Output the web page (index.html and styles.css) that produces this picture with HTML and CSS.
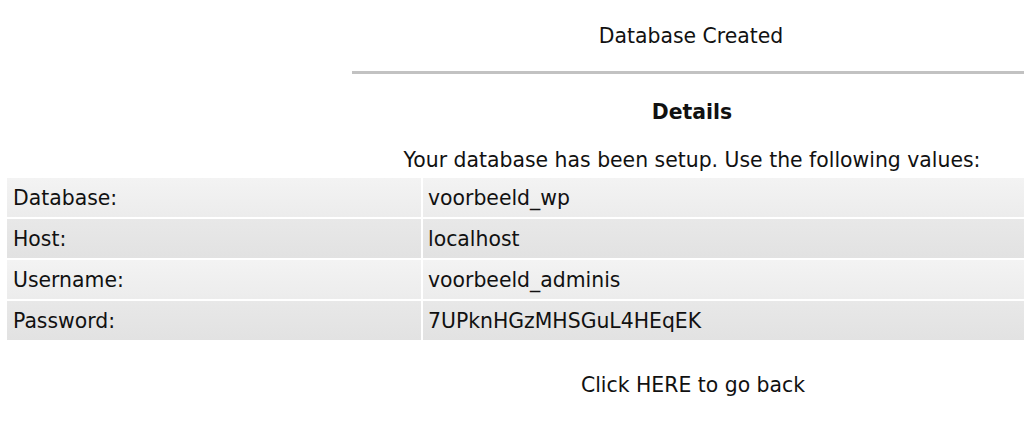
FILE: index.html
```html
<!DOCTYPE html>
<html lang="nl">
<head>
<meta charset="utf-8">
<title>Database Created</title>
<link rel="stylesheet" href="styles.css">
</head>
<body>
<div class="head">
  <div class="title">Database Created</div>
  <hr class="rule">
  <div class="subtitle">Details</div>
  <div class="intro">Your database has been setup. Use the following values:</div>
</div>
<div class="values">
  <div class="cell label odd">Database:</div><div class="cell value odd">voorbeeld_wp</div>
  <div class="cell label even">Host:</div><div class="cell value even">localhost</div>
  <div class="cell label odd">Username:</div><div class="cell value odd">voorbeeld_adminis</div>
  <div class="cell label even">Password:</div><div class="cell value even">7UPknHGzMHSGuL4HEqEK</div>
</div>
<div class="back">Click <a href="#">HERE</a> to go back</div>
</body>
</html>
```
FILE: styles.css
```css
html, body {
  margin: 0;
  padding: 0;
  background: #ffffff;
}
body {
  font-family: "DejaVu Sans", Verdana, sans-serif;
  font-size: 20.4px;
  line-height: 24px;
  color: #111111;
}
.head {
  margin-left: 352px;
  text-align: center;
}
.title {
  padding-top: 24px;
  padding-left: 6px;
}
.rule {
  height: 3px;
  margin: 23px 0 0;
  border: 0;
  background: #c2c2c2;
}
.subtitle {
  margin-top: 26px;
  padding-left: 8px;
  font-weight: bold;
}
.intro {
  margin-top: 24px;
  padding-left: 8px;
}
.values {
  display: grid;
  grid-template-columns: 414px 1fr;
  gap: 2px;
  margin: 6px 0 0 7px;
}
.cell {
  height: 39px;
  display: flex;
  align-items: center;
  white-space: nowrap;
}
.label {
  padding-left: 6px;
}
.value {
  padding-left: 5px;
}
.odd {
  background: linear-gradient(#f3f3f3, #ececec);
}
.even {
  background: linear-gradient(#e8e8e8, #e2e2e2);
}
.back {
  margin: 33px 0 0 352px;
  padding-left: 10px;
  text-align: center;
}
.back a {
  color: inherit;
  text-decoration: none;
}
```
